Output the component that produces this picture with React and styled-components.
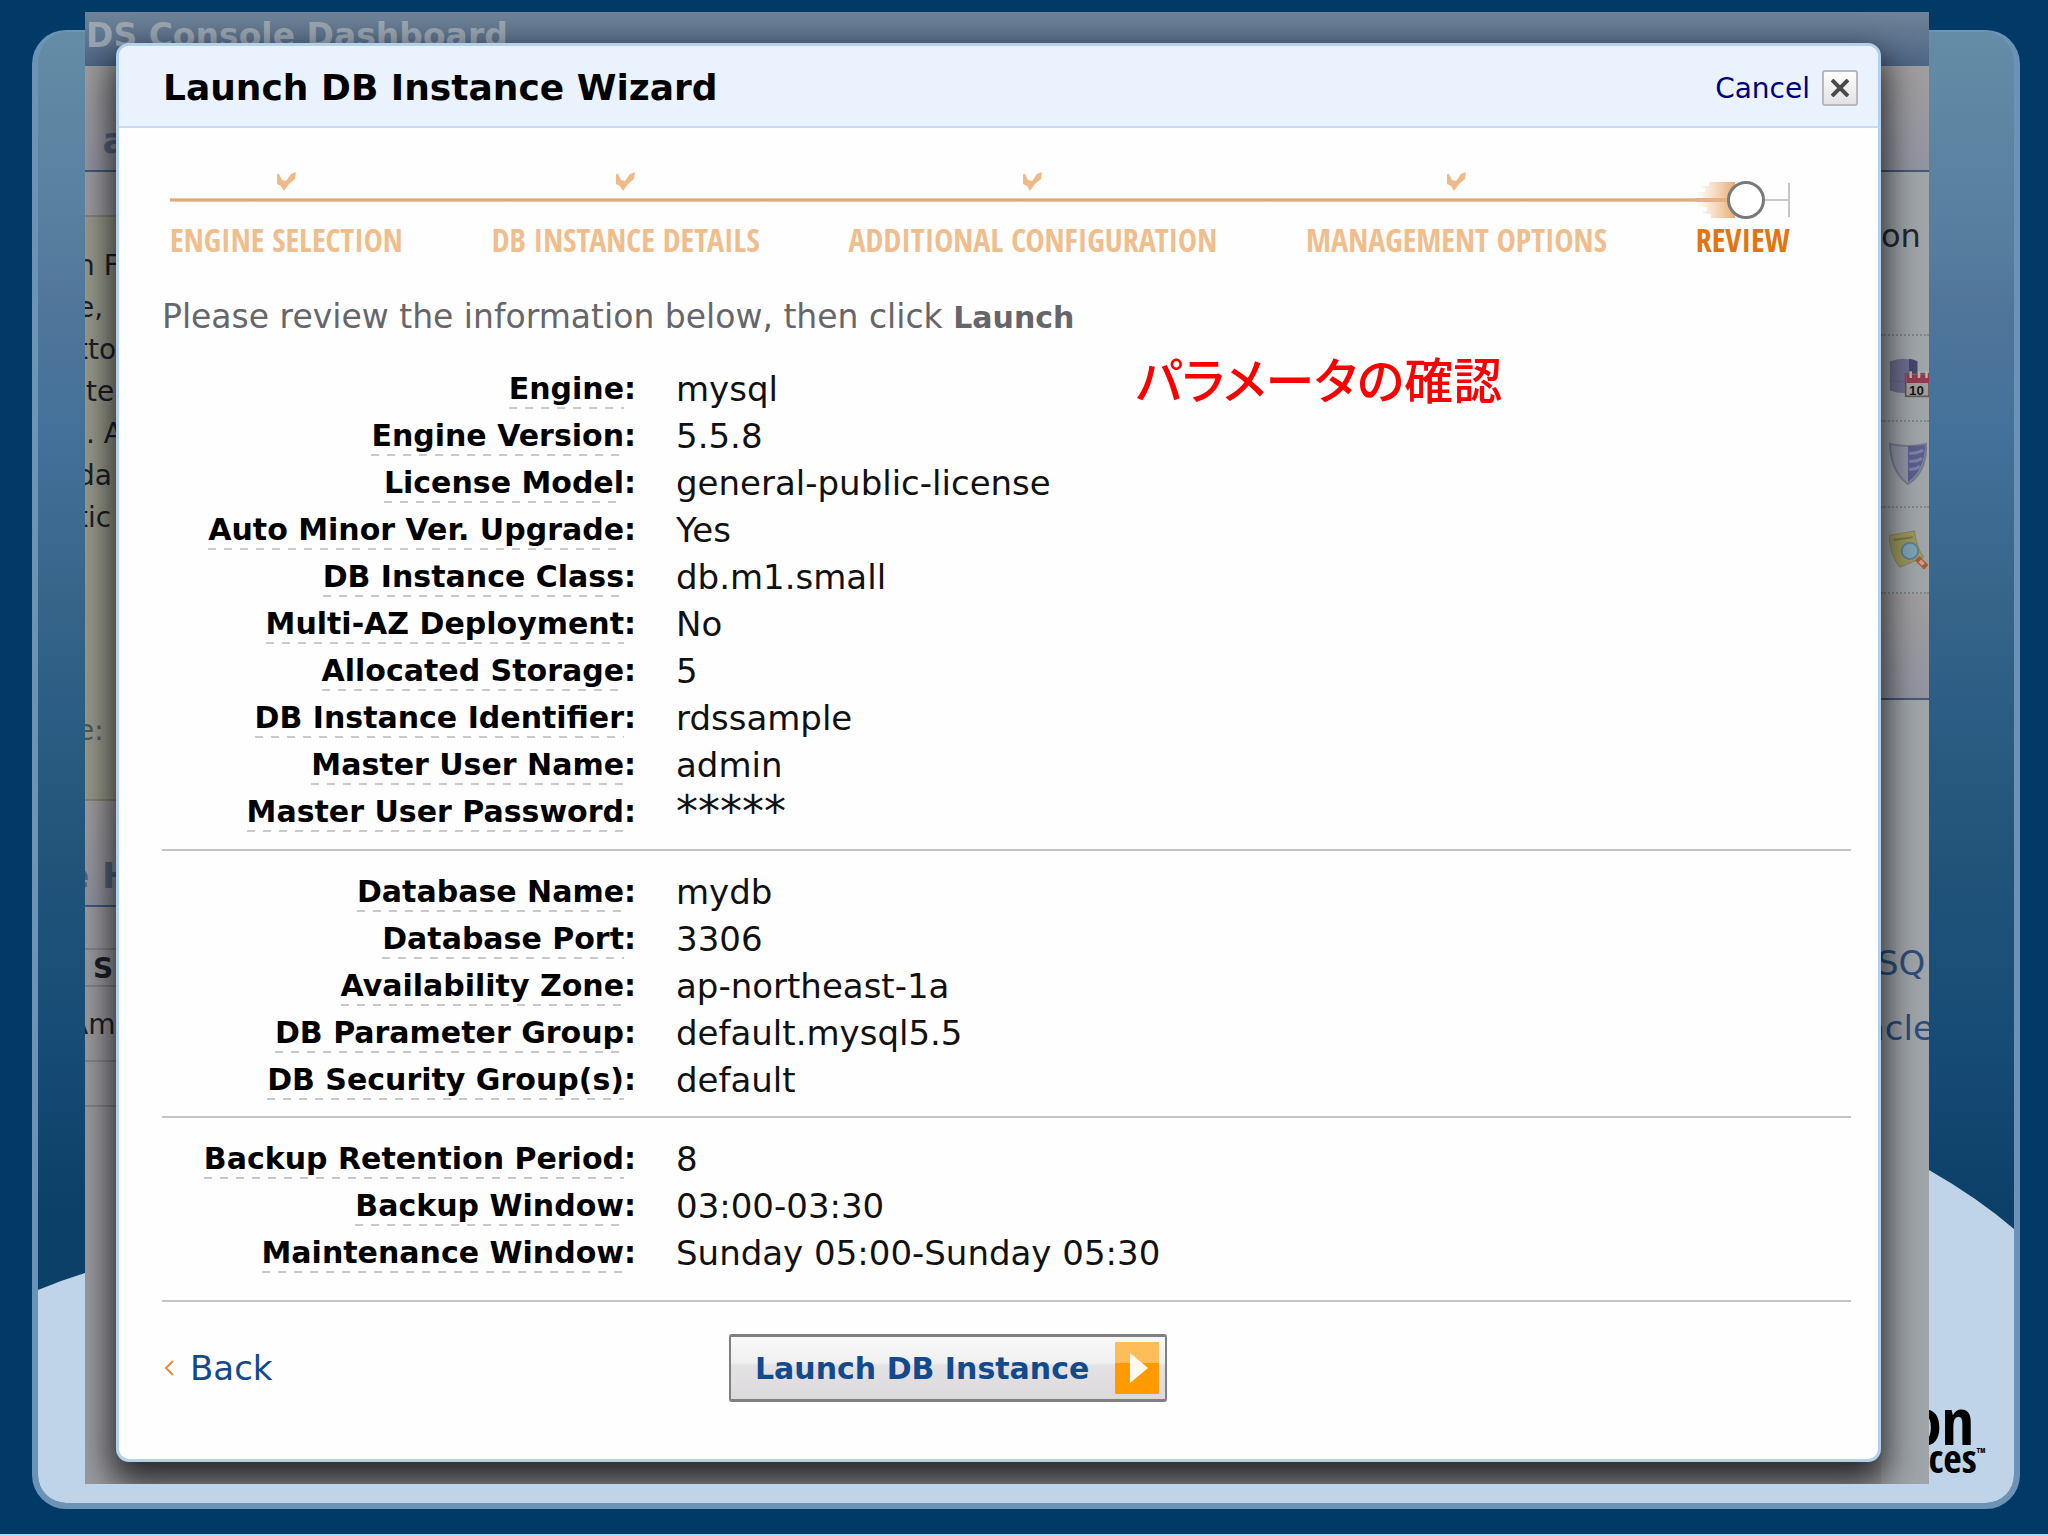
import React from "react";
import styled, { createGlobalStyle, css } from "styled-components";

const sans = `"DejaVu Sans", Verdana, sans-serif`;
const narrow = `"Liberation Sans Narrow", "Arial Narrow", "Open Sans Condensed", "Liberation Sans", sans-serif`;

const GlobalStyle = createGlobalStyle`
  *, *::before, *::after { box-sizing: border-box; }
  body { margin: 0; background: #013a66; font-family: ${sans}; }
`;

/* Slide */

const Slide = styled.div`
  display: grid;
  grid-template: minmax(0, 1fr) / minmax(0, 1fr);
  min-height: 100vh;
  background: #013a66;
  border-bottom: 2px solid #b0dcee;
`;

const layer = css`
  grid-area: 1 / 1;
`;

const SlideCard = styled.div`
  ${layer}
  display: grid;
  margin: 30px 28px 25px 32px;
  border: 6px solid #6b93b5;
  border-top-width: 2px;
  border-radius: 34px;
  background: linear-gradient(
    #648ca6 0%, #587f9f 13%, #50759a 19%, #44719a 27%, #38658a 38%,
    #2c5d84 46%, #25567b 53%, #174c76 68%, #0d4069 80%
  );
  overflow: hidden;
`;

const Wave = styled.svg`
  ${layer}
  align-self: end;
  width: 100%;
  height: 333px;
`;

const Logo = styled.div`
  ${layer}
  align-self: end;
  justify-self: end;
  display: grid;
  justify-items: end;
  padding: 0 40px 28px 0;
  font-family: ${narrow};
  font-weight: bold;
  color: #000;
`;

const LogoName = styled.span`
  font-size: 64px;
  line-height: 40px;
`;

const LogoService = styled.span`
  display: flex;
  margin-right: -12px;
  font-size: 40px;
  line-height: 34px;

  small {
    font-size: 14px;
    line-height: 24px;
  }
`;

/* Console page behind the dialog */

const Console = styled.div`
  ${layer}
  display: grid;
  grid-template: minmax(0, 1fr) / minmax(0, 1fr);
  margin: 12px 119px 50px 85px;
  background: #9b9ba0;
  overflow: hidden;
`;

const Page = styled.div`
  ${layer}
  display: flex;
  flex-direction: column;
  overflow: hidden;
`;

const Toolbar = styled.div`
  height: 54px;
  padding-left: 1px;
  background: linear-gradient(#6e8396, #5f7590 50%, #4e6584);
  color: #9ba6b2;
  font-size: 33px;
  font-weight: bold;
  line-height: 48px;
`;

const Columns = styled.div`
  display: flex;
  flex: 1;
  min-height: 0;
`;

const MainColumn = styled.div`
  flex: 1;
  min-width: 0;
`;

const SideColumn = styled.div`
  width: 48px;
  background: #a0a5aa;
  overflow: hidden;
  white-space: nowrap;
`;

const SectionTitle = styled.div`
  display: flex;
  align-items: flex-end;
  height: 106px;
  padding-bottom: 8px;
  border-bottom: 2px solid #43587c;
  background: linear-gradient(#a09e9f, #9294a2);
  color: #56677e;
  font-size: 36px;
  font-weight: bold;
  line-height: 42px;
  white-space: pre;
  text-indent: -20px;
`;

const Notice = styled.div`
  height: 586px;
  margin-top: 43px;
  padding-top: 28px;
  border: solid #838578;
  border-width: 2px 0;
  background: #999a8c;
  color: #1c1f2a;
  font-size: 28px;
  line-height: 42px;
  white-space: pre;
  text-indent: -8px;
`;

const NoticeLabel = styled.div`
  margin-top: 171px;
  color: #55585a;
`;

const StatusRow = styled.div`
  height: ${(p) => p.$height}px;
  border-bottom: 2px solid #84848a;
  color: #1c1f2a;
  font-size: 28px;
  font-weight: ${(p) => (p.$bold ? "bold" : "normal")};
  line-height: ${(p) => p.$height}px;
  text-indent: ${(p) => (p.$bold ? 8 : -16)}px;
`;

const SideText = styled.div`
  height: 164px;
  padding-top: 43px;
  border-bottom: 2px dotted #80858a;
  color: #23272f;
  font-size: 32px;
  line-height: 42px;
`;

const SideItem = styled.div`
  display: flex;
  align-items: center;
  height: 86px;
  padding-left: 8px;
  border-bottom: 2px dotted #80858a;
`;

const SideLinks = styled.nav`
  display: grid;
  gap: 23px;
  padding-top: 242px;
`;

const SideLink = styled.a`
  color: #2d4d7a;
  font-size: 34px;
  line-height: 42px;
  text-decoration: none;
  text-indent: ${(p) => p.$indent}px;
`;

/* Dialog */

const Dialog = styled.section`
  ${layer}
  display: flex;
  flex-direction: column;
  margin: 31px 48px 22px 31px;
  border: 3px solid #b2d1ef;
  border-radius: 13px;
  background: #fefefe;
  box-shadow: 0 16px 34px 5px rgba(0, 0, 0, 0.75);
  overflow: hidden;
`;

const DialogHeader = styled.header`
  display: flex;
  align-items: center;
  justify-content: space-between;
  height: 82px;
  padding: 4px 20px 0 44px;
  border-bottom: 2px solid #c6dcee;
  background: #eaf2fe;
`;

const Title = styled.h1`
  margin: 0;
  font-size: 36px;
  line-height: 44px;
  color: #000;
`;

const CancelButton = styled.button`
  display: flex;
  align-items: center;
  gap: 12px;
  padding: 0;
  border: 0;
  background: none;
  color: #00007c;
  font: 28px ${sans};
`;

const CloseBox = styled.span`
  display: grid;
  place-items: center;
  width: 36px;
  height: 36px;
  border: 2px solid #b8b8ba;
  border-radius: 3px;
  background: linear-gradient(#fff, #e2e2e4);
`;

const DialogBody = styled.div`
  flex: 1;
  padding: 44px 27px 0 43px;
`;

const Steps = styled.div`
  display: grid;
  margin: 0 61px 0 8px;
`;

const Track = styled.div`
  ${layer}
  align-self: start;
  display: flex;
  align-items: center;
  height: 56px;
`;

const TrackDone = styled.span`
  flex: 1;
  height: 4px;
  background: linear-gradient(#f6d9bd, #dda774 40%, #dda774 60%, #f6d9bd);
`;

const Streak = styled.svg`
  width: 40px;
  height: 40px;
  margin-right: -8px;
`;

const Knob = styled.span`
  width: 38px;
  height: 38px;
  border: 3px solid #77797a;
  border-radius: 50%;
  background: #fff;
`;

const TrackLeft = styled.span`
  width: 25px;
  height: 34px;
  border-right: 2px solid #c6c6c8;
  background: linear-gradient(#c6c6c8, #c6c6c8) center / 100% 2px no-repeat;
`;

const StepList = styled.ol`
  ${layer}
  display: flex;
  justify-content: space-between;
  margin: 0;
  padding: 0;
  list-style: none;
`;

const Step = styled.li`
  display: grid;
  grid-template-rows: 50px 36px;
  justify-items: center;
  color: ${(p) => (p.$current ? "#e37510" : "#f0bd8c")};
  font-family: ${narrow};
  font-size: 32px;
  font-weight: bold;
  line-height: 36px;
`;

const CheckMark = styled.svg`
  display: block;
  width: 19px;
  height: 19px;
`;

const Intro = styled.p`
  margin: 37px 0 25px;
  color: #66666a;
  font-size: 33px;
  line-height: 44px;

  strong {
    font-size: 30px;
  }
`;

const Group = styled.dl`
  display: grid;
  grid-template-columns: 474px 1fr;
  column-gap: 40px;
  grid-auto-rows: 47px;
  align-items: center;
  margin: 0;
  padding: ${(p) => (p.$first ? "0 0 14px" : "17px 0 13px")};
  border-bottom: 2px solid #c4c4c6;

  &:last-of-type {
    padding-bottom: 24px;
  }
`;

const Label = styled.dt`
  font-size: 30px;
  font-weight: bold;
  line-height: 40px;
  text-align: right;
  color: #000;
`;

const Hint = styled.span`
  display: inline-block;
  background: repeating-linear-gradient(90deg, #c9c9cb 0 8px, transparent 8px 16px)
    left bottom / 100% 2px no-repeat;
`;

const Value = styled.dd`
  margin: 0;
  font-size: ${(p) => (p.$masked ? 44 : 34)}px;
  line-height: 40px;
  color: #111;
`;

const Note = styled.p`
  position: absolute;
  top: -22px;
  left: 974px;
  margin: 0;
  color: #fa0000;
  font: 500 49px / 70px "Noto Sans CJK JP", sans-serif;
  font-feature-settings: "palt";
  white-space: nowrap;
`;

const Summary = styled.div`
  position: relative;
`;

const Footer = styled.footer`
  display: grid;
  grid-template-columns: 567px auto 1fr;
  align-items: center;
  padding-top: 32px;
`;

const BackLink = styled.a`
  display: flex;
  align-items: center;
  gap: 16px;
  padding-left: 2px;
  color: #114a8c;
  font-size: 34px;
  line-height: 44px;
  text-decoration: none;
`;

const LaunchButton = styled.button`
  display: flex;
  align-items: center;
  justify-content: space-between;
  gap: 26px;
  height: 68px;
  padding: 0 6px 0 24px;
  border: 2px solid #7f7f82;
  border-width: 3px 2px;
  border-radius: 3px;
  background: linear-gradient(#faf9fa, #f1f0f1 42%, #e4e2e4 46%, #dbd9db);
  color: #124a8c;
  font: bold 30px ${sans};
`;

const Go = styled.svg`
  width: 44px;
  height: 52px;
`;

/* Data */

const steps = [
  "ENGINE SELECTION",
  "DB INSTANCE DETAILS",
  "ADDITIONAL CONFIGURATION",
  "MANAGEMENT OPTIONS",
  "REVIEW",
];

const groups = [
  [
    ["Engine", "mysql"],
    ["Engine Version", "5.5.8"],
    ["License Model", "general-public-license"],
    ["Auto Minor Ver. Upgrade", "Yes"],
    ["DB Instance Class", "db.m1.small"],
    ["Multi-AZ Deployment", "No"],
    ["Allocated Storage", "5"],
    ["DB Instance Identifier", "rdssample"],
    ["Master User Name", "admin"],
    ["Master User Password", "*****", true],
  ],
  [
    ["Database Name", "mydb"],
    ["Database Port", "3306"],
    ["Availability Zone", "ap-northeast-1a"],
    ["DB Parameter Group", "default.mysql5.5"],
    ["DB Security Group(s)", "default"],
  ],
  [
    ["Backup Retention Period", "8"],
    ["Backup Window", "03:00-03:30"],
    ["Maintenance Window", "Sunday 05:00-Sunday 05:30"],
  ],
];

/* Drawings */

const Check = () => (
  <CheckMark viewBox="0 0 19 19" aria-hidden="true">
    <path d="M0 2 L2 2 L5 8 L9 9 L14 2 L19 0 L18 7 L12 12 L7 19 L4 14 L0 12 Z" fill="#f0ba88" />
  </CheckMark>
);

const CalendarDb = () => (
  <svg width="48" height="50" viewBox="0 0 48 50" aria-hidden="true">
    <path d="M1 5 Q17 -1 34 5 V40 Q17 46 1 40 Z" fill="#6d6d90" />
    <path d="M24 2 Q30 3 34 5 V20 H24 Z" fill="#44476e" />
    <path d="M1 28 Q17 31 34 28" stroke="#62638a" strokeWidth="1" fill="none" />
    <rect x="20" y="20" width="28" height="27" fill="#a39e9c" stroke="#5e5a50" strokeWidth="2" />
    <rect x="21" y="21" width="27" height="10" fill="#943a50" />
    <path d="M26 17 V25 M36 17 V25 M45 17 V25" stroke="#c0b0b0" strokeWidth="3" />
    <text x="24" y="45" fontFamily="Liberation Sans" fontWeight="bold" fontSize="16" fill="#141414">10</text>
  </svg>
);

const Shield = () => (
  <svg width="38" height="44" viewBox="0 0 38 44" aria-hidden="true">
    <path d="M1 2 Q19 6 37 2 Q38 30 19 42 Q2 30 1 2 Z" fill="#9095a6" stroke="#767b8e" strokeWidth="2" />
    <path d="M19 4 Q28 4 36 3 Q36 28 19 40 Z" fill="#5a5f8c" />
    <path d="M20 11 Q28 12 34 8 M20 19 Q28 20 33 16 M20 27 Q27 28 31 24" stroke="#7d82a8" strokeWidth="3" fill="none" />
  </svg>
);

const SearchNote = () => (
  <svg width="44" height="44" viewBox="0 0 44 44" aria-hidden="true">
    <path d="M0 6 L28 1 Q30 18 38 30 L12 41 Q2 30 0 6 Z" fill="#99985f" stroke="#88854a" strokeWidth="1" />
    <path d="M5 11 L26 8" stroke="#7b7843" strokeWidth="2" />
    <path d="M31 31 L41 41" stroke="#a55a3c" strokeWidth="7" />
    <path d="M34 34 L38 38" stroke="#d0a080" strokeWidth="4" />
    <circle cx="23" cy="23" r="9" fill="#7fa3b5" stroke="#5b7f94" strokeWidth="2" />
  </svg>
);

export default function App() {
  return (
    <>
      <GlobalStyle />
      <Slide>
        <SlideCard>
          <Wave viewBox="0 0 1976 333" preserveAspectRatio="none" aria-hidden="true">
            <path d="M0 120 Q24 110 47 103 Q500 -40 1000 -60 Q1560 -80 1891 0 Q1940 28 1976 59 V333 H0 Z" fill="#bfd4e8" />
          </Wave>
          <Logo>
            <LogoName>amazon</LogoName>
            <LogoService>
              web services<small>™</small>
            </LogoService>
          </Logo>
        </SlideCard>

        <Console>
          <Page>
            <Toolbar>DS Console Dashboard</Toolbar>
            <Columns>
              <MainColumn>
                <SectionTitle>{"   a"}</SectionTitle>
                <Notice>
                  <div>n F</div>
                  <div>e,</div>
                  <div>tto</div>
                  <div>{" te"}</div>
                  <div>{" . A"}</div>
                  <div>da</div>
                  <div>tic</div>
                  <NoticeLabel>e:</NoticeLabel>
                </Notice>
                <SectionTitle>e H</SectionTitle>
                <StatusRow $height={43} />
                <StatusRow $height={37} $bold>S</StatusRow>
                <StatusRow $height={75}>Am</StatusRow>
                <StatusRow $height={45} />
              </MainColumn>
              <SideColumn>
                <SectionTitle />
                <SideText>on</SideText>
                <SideItem><CalendarDb /></SideItem>
                <SideItem><Shield /></SideItem>
                <SideItem><SearchNote /></SideItem>
                <SectionTitle />
                <SideLinks>
                  <SideLink href="#mysql" $indent={-4}>SQ</SideLink>
                  <SideLink href="#oracle" $indent={-17}>acle</SideLink>
                </SideLinks>
              </SideColumn>
            </Columns>
          </Page>

          <Dialog role="dialog" aria-labelledby="wizard-title">
            <DialogHeader>
              <Title id="wizard-title">Launch DB Instance Wizard</Title>
              <CancelButton type="button">
                Cancel
                <CloseBox>
                  <svg width="18" height="18" viewBox="0 0 18 18" aria-hidden="true">
                    <path d="M1 1 L17 17 M17 1 L1 17" stroke="#4a4a4c" strokeWidth="4" />
                  </svg>
                </CloseBox>
              </CancelButton>
            </DialogHeader>

            <DialogBody>
              <Steps>
                <Track>
                  <TrackDone />
                  <Streak viewBox="0 0 40 40" aria-hidden="true">
                    <defs>
                      <linearGradient id="streak" x1="0" x2="1">
                        <stop offset="0" stopColor="#f0c59a" stopOpacity="0" />
                        <stop offset="1" stopColor="#e8ab70" />
                      </linearGradient>
                    </defs>
                    <path d="M14 2 H40 V38 H16 V34 H8 V31 H12 V27 H2 V23 H8 V21 H0 V19 H8 V16 H3 V12 H10 V8 H6 V6 H14 Z" fill="url(#streak)" />
                    <rect y="18" width="40" height="4" fill="#e6b283" />
                  </Streak>
                  <Knob />
                  <TrackLeft />
                </Track>
                <StepList>
                  {steps.map((name, i) => (
                    <Step key={name} $current={i === steps.length - 1}>
                      <span>{i < steps.length - 1 && <Check />}</span>
                      {name}
                    </Step>
                  ))}
                </StepList>
              </Steps>

              <Intro>
                Please review the information below, then click <strong>Launch</strong>
              </Intro>

              <Summary>
                {groups.map((rows, i) => (
                  <Group key={i} $first={i === 0}>
                    {rows.map(([label, value, masked]) => (
                      <React.Fragment key={label}>
                        <Label>
                          <Hint>{label}</Hint>:
                        </Label>
                        <Value $masked={masked}>{value}</Value>
                      </React.Fragment>
                    ))}
                  </Group>
                ))}
                <Note lang="ja">パラメータの確認</Note>
              </Summary>

              <Footer>
                <BackLink href="#back">
                  <svg width="10" height="16" viewBox="0 0 10 16" aria-hidden="true">
                    <path d="M9 1 L2 8 L9 15" fill="none" stroke="#ea8a3c" strokeWidth="2" />
                  </svg>
                  Back
                </BackLink>
                <LaunchButton type="button">
                  Launch DB Instance
                  <Go viewBox="0 0 44 52" aria-hidden="true">
                    <rect width="44" height="52" fill="#ff9a00" />
                    <rect width="44" height="21" fill="#ffbd5a" />
                    <path d="M15 11 L33 26 L15 41 Z" fill="#fffaf0" />
                  </Go>
                </LaunchButton>
              </Footer>
            </DialogBody>
          </Dialog>
        </Console>
      </Slide>
    </>
  );
}
